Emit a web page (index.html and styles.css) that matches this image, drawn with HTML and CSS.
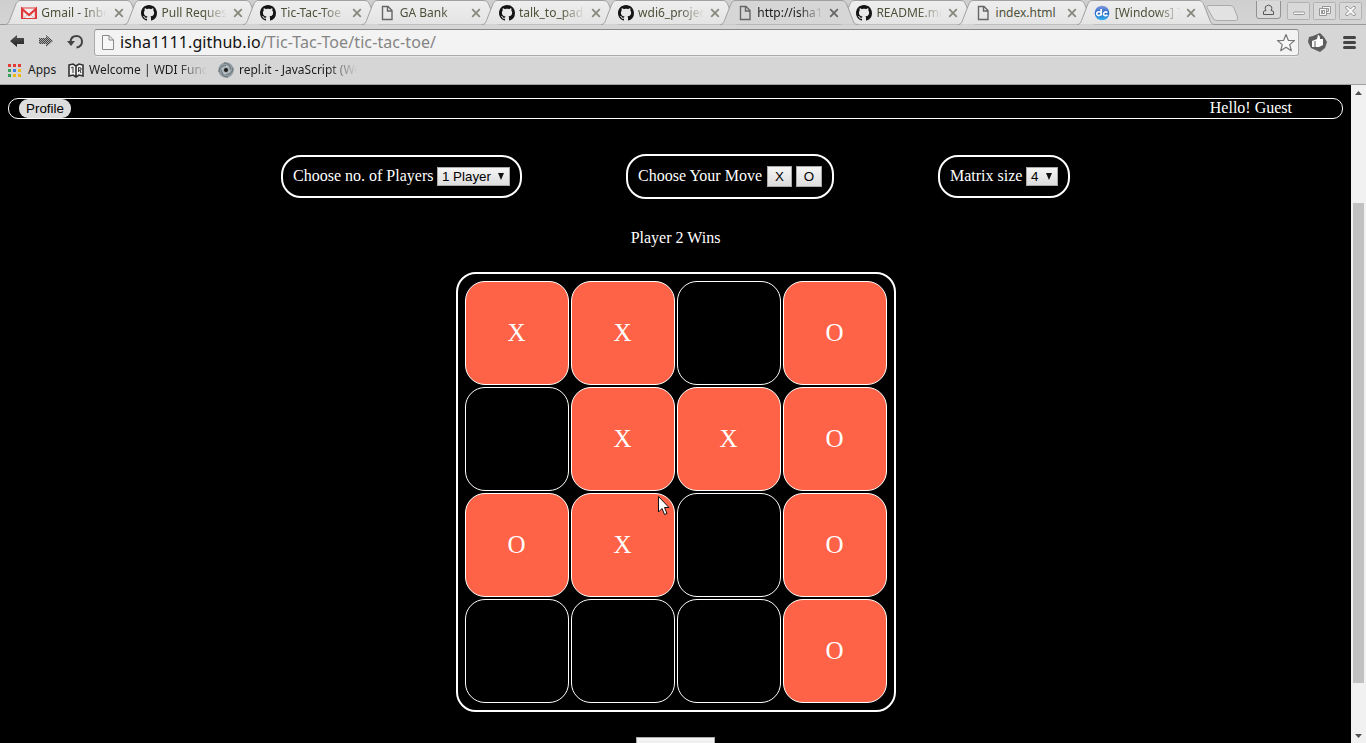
FILE: index.html
```html
<!DOCTYPE html>
<html lang="en">
<head>
<meta charset="utf-8">
<title>Tic-Tac-Toe</title>
<link rel="stylesheet" href="styles.css">
</head>
<body>
<svg class="defs" width="0" height="0">
  <defs>
    <linearGradient id="tabfill" x1="0" y1="0" x2="0" y2="1"><stop offset="0" stop-color="#eeeeee"/><stop offset="1" stop-color="#e4e4e4"/></linearGradient>
    <linearGradient id="dcfill" x1="0" y1="0" x2="0" y2="1"><stop offset="0" stop-color="#8998dc"/><stop offset=".5" stop-color="#2467c9"/><stop offset="1" stop-color="#39b6ef"/></linearGradient>
    <linearGradient id="arrow" x1="0" y1="0" x2="0" y2="1"><stop offset="0" stop-color="#555"/><stop offset="1" stop-color="#222"/></linearGradient>
    <pattern id="dots" width="2" height="2" patternUnits="userSpaceOnUse"><rect width="2" height="2" fill="#aaa"/><rect width="1" height="1" fill="#444"/><rect x="1" y="1" width="1" height="1" fill="#444"/></pattern>
    <symbol id="tab" viewBox="0 0 138 25"><path d="M0 24.5C3 24.5 3.500 23 4.500 20.500L10.500 5C12 1.500 13 .5 16 .5H121C124 .5 125.500 1.500 127 5L133 20.500C134 23 134.500 24.500 138 24.500"/></symbol>
    <symbol id="github" viewBox="0 0 16 16"><path fill="#141414" d="M8 0C3.580 0 0 3.580 0 8c0 3.540 2.290 6.530 5.470 7.590.4.070.55-.17.55-.38 0-.19-.01-.82-.01-1.490-2.010.37-2.530-.49-2.690-.94-.09-.23-.48-.94-.82-1.130-.28-.15-.68-.52-.01-.53.63-.01 1.080.58 1.230.82.72 1.210 1.870.87 2.330.66.07-.52.28-.87.51-1.070-1.780-.2-3.640-.89-3.640-3.950 0-.87.31-1.590.82-2.150-.08-.2-.36-1.020.08-2.120 0 0 .67-.21 2.200.82.64-.18 1.320-.27 2-.27s1.360.09 2 .27c1.530-1.040 2.200-.82 2.200-.82.44 1.100.16 1.920.08 2.120.51.56.82 1.270.82 2.150 0 3.070-1.870 3.750-3.650 3.950.29.25.54.73.54 1.480 0 1.070-.01 1.930-.01 2.200 0 .21.15.46.55.38A8.010 8.010 0 0 0 16 8c0-4.420-3.580-8-8-8z"/></symbol>
    <symbol id="page" viewBox="0 0 16 16"><path fill="none" stroke="#666" stroke-width="1.400" d="M3.500 1.500H9L13 5.500V14.500H3.500ZM8.500 1.500V6H13"/></symbol>
    <symbol id="gmail" viewBox="0 0 16 16"><path fill="#f5efef" d="M1 3h14v11H1z"/><path fill="none" stroke="#c9b6b4" d="M3 13L7 9M13 13L9 9"/><path fill="none" stroke="#de3a3c" stroke-width="2.200" d="M1.100 14V4L8 10L14.900 4V14"/><path fill="none" stroke="#de3a3c" d="M1 3h14M1 13.500H15"/></symbol>
    <symbol id="dc" viewBox="0 0 16 16"><circle cx="8" cy="8" r="7.300" fill="url(#dcfill)"/><path fill="none" stroke="#fff" stroke-width="1.700" d="M7.200 4V10.500M7 7.400C4.500 5.800 2.300 7.500 2.800 9.300C3.400 11 6 11 7 9.200M13.500 7.600C11.300 6.200 9.300 7.300 9.500 9.200C9.800 11 12 11 13.500 9.800"/></symbol>
    <symbol id="close" viewBox="0 0 10 10"><path fill="none" stroke="currentColor" stroke-width="1.800" d="M1.200 1.200L8.800 8.800M8.800 1.200L1.200 8.800"/></symbol>
  </defs>
</svg>
<div class="browser">
  <div class="strip">
    <div class="tab first"><svg class="shape"><use href="#tab"/></svg><svg class="fav"><use href="#gmail"/></svg><span class="title">Gmail - Inbox</span><svg class="x"><use href="#close"/></svg></div>
    <div class="tab"><svg class="shape"><use href="#tab"/></svg><svg class="fav"><use href="#github"/></svg><span class="title">Pull Requests</span><svg class="x"><use href="#close"/></svg></div>
    <div class="tab"><svg class="shape"><use href="#tab"/></svg><svg class="fav"><use href="#github"/></svg><span class="title">Tic-Tac-Toe</span><svg class="x"><use href="#close"/></svg></div>
    <div class="tab"><svg class="shape"><use href="#tab"/></svg><svg class="fav"><use href="#page"/></svg><span class="title">GA Bank</span><svg class="x"><use href="#close"/></svg></div>
    <div class="tab"><svg class="shape"><use href="#tab"/></svg><svg class="fav"><use href="#github"/></svg><span class="title">talk_to_pad</span><svg class="x"><use href="#close"/></svg></div>
    <div class="tab"><svg class="shape"><use href="#tab"/></svg><svg class="fav"><use href="#github"/></svg><span class="title">wdi6_projec</span><svg class="x"><use href="#close"/></svg></div>
    <div class="tab active"><svg class="shape"><use href="#tab"/></svg><svg class="fav"><use href="#page"/></svg><span class="title">http://isha1</span><svg class="x"><use href="#close"/></svg></div>
    <div class="tab"><svg class="shape"><use href="#tab"/></svg><svg class="fav"><use href="#github"/></svg><span class="title">README.md</span><svg class="x"><use href="#close"/></svg></div>
    <div class="tab"><svg class="shape"><use href="#tab"/></svg><svg class="fav"><use href="#page"/></svg><span class="title plain">index.html</span><svg class="x"><use href="#close"/></svg></div>
    <div class="tab"><svg class="shape"><use href="#tab"/></svg><svg class="fav"><use href="#dc"/></svg><span class="title">[Windows] T</span><svg class="x"><use href="#close"/></svg></div>
    <svg class="newtab" width="34" height="25"><path fill="#e2e2e2" stroke="#aaa" d="M3.500 5.500H25Q28 5.500 29 8L32.500 17Q33.500 20.500 30.500 20.500H12Q9 20.500 8 18L2 7.500Q1.500 5.500 3.500 5.500Z"/></svg>
    <svg class="winbtns" width="112" height="24" fill="none">
      <path stroke="#929292" fill="#d9d9d9" d="M.5 1V16Q.5 18.500 3 18.500H22Q24.500 18.500 24.500 16V1"/>
      <path stroke="#555" d="M7.500 14.500V12Q7.500 10.500 10 10.500Q8.500 8 9.500 6.500Q12.500 3.500 15.500 6.500Q16.500 8 15 10.500Q17.500 10.500 17.500 12V14.500Z"/>
      <g stroke="#b2b2b2" fill="#d9d9d9"><rect x="31.500" y="2.500" width="22" height="17" rx="1"/><rect x="57.500" y="2.500" width="22" height="17" rx="1"/><rect x="83.500" y="2.500" width="22" height="17" rx="1"/></g>
      <g stroke="#969696" fill="#f5f5f5"><rect x="37.500" y="12" width="11" height="2.500" rx="1"/><path fill-rule="evenodd" d="M66.500 6.500H74.500V13.500H66.500ZM68.500 8.500H72.500V11.500H68.500Z"/><path fill-rule="evenodd" d="M63.500 8.500H70.500V15.500H63.500ZM65.500 10.500H68.500V13.500H65.500Z"/><path d="M90 6.500L92 6.500L94.500 9L97 6.500L99 6.500L99.500 8L96.500 11L99.500 14L99 15.500L97 15.500L94.500 13L92 15.500L90 15.500L89.500 14L92.500 11L89.500 8Z"/></g>
    </svg>
  </div>
  <div class="toolbar">
    <svg class="nav" width="90" height="30">
      <path fill="url(#arrow)" d="M10 16L17 10V13H24V19H17V22Z"/>
      <path fill="url(#dots)" d="M53 16L46 10V13H39V19H46V22Z"/>
      <path fill="none" stroke="#444" stroke-width="2" d="M70.500 16.500C71 12.500 74 11 76.500 11C80 11 82 13.500 82 16.500C82 20 79.500 22 76.500 22.500"/><path fill="#444" d="M67 16H75L71 21Z"/>
    </svg>
    <div class="omnibox">
      <svg class="doc" width="14" height="18"><path fill="#f7f7f7" stroke="#8a8a8a" d="M1.500 2.500H8L12.500 7V16.500H1.500ZM8 2.500V7H12.500"/></svg>
      <span class="url">isha1111.github.io<span class="path">/Tic-Tac-Toe/tic-tac-toe/</span></span>
      <svg class="star" width="20" height="20"><path fill="#fafafa" stroke="#777" stroke-width="1.200" stroke-linejoin="round" d="M10 1.500L12.300 7.300L18.500 7.600L13.700 11.600L15.300 17.700L10 14.300L4.700 17.700L6.300 11.600L1.500 7.600L7.700 7.300Z"/></svg>
    </div>
    <svg class="tools" width="66" height="30">
      <path fill="#5d5d5d" d="M13 8L20 5L24 9L27 14L25 20L20 24L11 20L8 14L9 9Z"/><path fill="#fafafa" d="M12 13L17 11L18 7Q20 7 20 11H23V17L19 19H12Z"/><path stroke="#5d5d5d" d="M15 13V19"/>
      <g fill="#444"><rect x="43" y="8" width="13" height="3" rx="1.500"/><rect x="43" y="13" width="13" height="3" rx="1.500"/><rect x="43" y="18" width="13" height="3" rx="1.500"/></g>
    </svg>
  </div>
  <div class="bookmarks">
    <svg width="13" height="13"><g fill="#e53b35"><path d="M0 0H3V3H0ZM5 0H8V3H5ZM10 0H13V3H10Z"/></g><path fill="#35a156" d="M0 5H3V8H0ZM0 10H3V13H0Z"/><path fill="#3d7be3" d="M5 5H8V8H5Z"/><path fill="#f3b715" d="M10 5H13V8H10ZM5 10H8V13H5ZM10 10H13V13H10Z"/></svg>
    <span class="bm apps">Apps</span>
    <svg class="book" width="16" height="15" fill="none" stroke="#333"><path fill="#f2f2f2" stroke-width="1.600" d="M1 2L5 1L8 3L11 1L15 2V13L11 12L8 14L5 12L1 13ZM8 3V14"/><path d="M3 5L5 4V10M10.500 9V4.500L13 5V7L10.500 7.500M12 7.500L13 10"/></svg>
    <span class="bm wdi fade">Welcome | WDI Func</span>
    <svg class="swirl" width="16" height="16" fill="none"><circle cx="8" cy="8" r="6" stroke="#929da3" stroke-width="3.500"/><path stroke="#5f6b72" stroke-width="1" d="M8 4C3 3 1 7 1 10M12 8C13 3 9 1 6 1M8 12C13 13 15 9 15 6M4 8C3 13 7 15 10 15"/><circle cx="8" cy="8" r="3.600" fill="#a6afb3"/><circle cx="8" cy="8" r="2" fill="#171717"/></svg>
    <span class="bm repl fade">repl.it - JavaScript (We</span>
  </div>
</div>
<div class="viewport">
  <main class="page">
    <header class="bar"><span class="profile">Profile</span><span class="label">Hello! Guest</span></header>
    <section class="options">
      <div class="option players"><span class="label">Choose no. of Players</span><span class="select">1 Player <i></i></span></div>
      <div class="option move"><span class="label">Choose Your Move</span><span class="btn">X</span><span class="btn o">O</span></div>
      <div class="option size"><span class="label">Matrix size</span><span class="select">4 <i></i></span></div>
    </section>
    <p class="result">Player 2 Wins</p>
    <div class="board">
      <div class="cell on">X</div><div class="cell on">X</div><div class="cell"></div><div class="cell on">O</div>
      <div class="cell"></div><div class="cell on">X</div><div class="cell on">X</div><div class="cell on">O</div>
      <div class="cell on">O</div><div class="cell on">X</div><div class="cell"></div><div class="cell on">O</div>
      <div class="cell"></div><div class="cell"></div><div class="cell"></div><div class="cell on">O</div>
    </div>
    <div class="reset"></div>
  </main>
  <div class="scrollbar">
    <svg width="15" height="15"><path fill="#505050" d="M4 10L7.500 6L11 10Z"/></svg>
    <div class="thumb"></div>
    <svg width="15" height="15"><path fill="#505050" d="M4 6L7.500 10L11 6Z"/></svg>
  </div>
</div>
<svg class="cursor" width="14" height="22"><path fill="#fff" stroke="#111" d="M1.500 1.500V17L5 13.500L7.500 19.500L10 18.500L7.500 12.500H12Z"/></svg>
</body>
</html>
```

FILE: styles.css
```css
* { box-sizing: border-box; }
body { margin: 0; width: 1366px; height: 743px; overflow: hidden; background: #000; font-family: "Liberation Serif", serif; }
svg { display: block; flex: none; }
.defs { position: absolute; }

.browser { height: 85px; background: #d6d6d6; border-bottom: 1px solid #a0a0a0; font-family: "Noto Sans", sans-serif; }
.strip { display: flex; height: 25px; padding-left: 5px; background: linear-gradient(#cfcfcf, #d4d4d4 24px, #999 24px); }
.tab { position: relative; display: flex; flex: none; align-items: center; width: 138px; height: 25px; margin-right: -18.850px; padding: 1px 0 0 17px; color: #4e5138; font-size: 12px; }
.first { padding-left: 16px; }
.shape { position: absolute; left: 0; top: 0; width: 138px; height: 25px; fill: url(#tabfill); stroke: #a0a0a0; }
.active { z-index: 1; color: #1b1b1b; }
.active .shape { fill: #d6d6d6; }
.fav { position: relative; width: 16px; height: 16px; }
.title { position: relative; width: 66px; margin-left: 4.300px; white-space: nowrap; line-height: 18px; -webkit-mask-image: linear-gradient(90deg, #000 42px, transparent 66px); mask-image: linear-gradient(90deg, #000 42px, transparent 66px); }
.plain { -webkit-mask-image: none; mask-image: none; }
.x { position: relative; width: 10px; height: 10px; margin-left: 5.700px; color: #88897c; }
.first .x { margin-left: 6.700px; }
.active .x { color: #666; }
.newtab { margin-left: 8px; }
.winbtns { margin-left: 17px; }

.toolbar { display: flex; height: 35px; }
.nav { width: 94px; }
.omnibox { display: flex; align-items: center; width: 1205px; height: 27px; margin-top: 4px; padding: 0 2px 0 6px; background: #f3f3f3; border: 1px solid #aaa; border-top-color: #888; border-radius: 3px; box-shadow: 0 1px #e8e8e8; }
.url { flex: 1; margin: 0 0 2px 5px; font-size: 16px; letter-spacing: 0.093px; line-height: 24px; color: #111; white-space: nowrap; }
.doc { margin-bottom: 1px; }
.path { color: #858585; }
.tools { margin: 3px 0 0 1px; }
.bookmarks { display: flex; align-items: center; height: 20px; padding-left: 8px; font-size: 12px; line-height: 18px; color: #1c1c1c; }
.bm { flex: none; white-space: nowrap; }
.apps { width: 40px; margin-left: 7px; }
.wdi { width: 118px; margin-left: 5px; }
.repl { width: 118px; margin-left: 5px; }
.swirl { margin-left: 11px; }
.fade { -webkit-mask-image: linear-gradient(90deg, #000 88px, transparent 118px); mask-image: linear-gradient(90deg, #000 88px, transparent 118px); }

.viewport { display: flex; height: 658px; }
.page { display: flex; flex-direction: column; align-items: center; width: 1351px; padding: 13px 8px 0; color: #fff; font-size: 16px; line-height: 18px; overflow: hidden; }
.bar { display: flex; flex: none; align-items: center; justify-content: space-between; width: 1335px; height: 21px; padding: 0 50px 0 10px; border: 1px solid #fff; border-radius: 10px; }
.label { margin-bottom: 2px; }
.profile { width: 52px; height: 19px; background: #ddd; border-radius: 9px; color: #000; font: 13.333px/19px "Liberation Sans", sans-serif; text-align: center; }
.options { display: flex; flex: none; align-items: center; width: 789px; height: 45px; margin-top: 35px; }
.option { display: flex; align-items: center; height: 43px; padding: 0 10px; border: 2px solid #fff; border-radius: 20px; white-space: nowrap; }
.players { width: 241px; }
.move { width: 208px; height: 45px; margin: 0 104px; }
.size { width: 132px; }
.select { display: flex; align-items: center; justify-content: space-between; margin-left: auto; height: 19px; padding: 0 5px 0 4px; background: linear-gradient(#f5f5f5, #ddd); border: 1px solid #a9a9a9; color: #000; font: 13.333px/17px "Liberation Sans", sans-serif; }
.players .select { width: 73px; }
.size .select { width: 32px; }
.select i { margin-bottom: 1px; border: 3.500px solid transparent; border-top: 7px solid #111; border-bottom: 0; }
.btn { width: 25px; height: 21px; margin-left: auto; background: linear-gradient(#f5f5f5, #ddd); border: 1px solid #a9a9a9; color: #000; font: 13.333px/19px "Liberation Sans", sans-serif; text-align: center; }
.btn.o { width: 26px; margin-left: 4px; }
.result { flex: none; margin: 30px 0 0; }
.board { display: grid; flex: none; grid-template-columns: repeat(4, 104px); grid-auto-rows: 104px; gap: 2px; width: 440px; height: 440px; margin: 25px 0 0 1px; padding: 7px; border: 2px solid #fff; border-radius: 20px; }
.cell { display: flex; align-items: center; justify-content: center; padding-right: 1px; border: 1px solid #fff; border-radius: 20px; font-size: 25px; line-height: 28px; }
.on { background: #ff6347; }
.reset { flex: none; width: 79px; height: 21px; margin-top: 25px; background: linear-gradient(#f5f5f5, #ddd); border: 1px solid #a9a9a9; }
.scrollbar { display: flex; flex-direction: column; align-items: center; width: 15px; background: #f1f1f1; }
.thumb { width: 11px; height: 480px; margin: 103px 0 auto; background: #c1c1c1; }
.cursor { position: absolute; left: 657px; top: 495px; }
```
